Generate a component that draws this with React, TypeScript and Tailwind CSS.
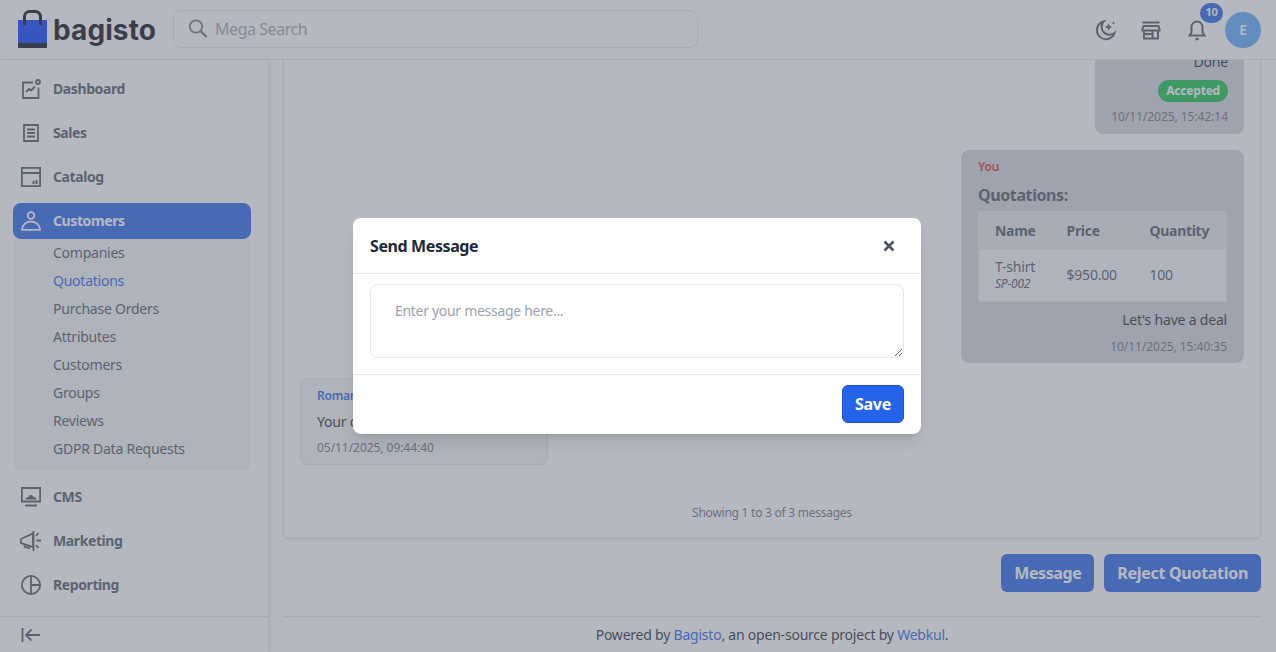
import React from "react";

const ic = { fill: "none", stroke: "currentColor", strokeWidth: 1.8 } as const;

function SearchIcon() {
  return (
    <svg width="20" height="19" viewBox="0 0 20 19" fill="none" stroke="currentColor" className="shrink-0 text-[#6b7280]">
      <circle cx="8" cy="7.500" r="6.200" strokeWidth="1.800" />
      <path d="M12.500 12l6 6" strokeWidth="2.400" />
    </svg>
  );
}
function Dash() {
  return (
    <svg width="20" height="20" viewBox="0 0 20 20" {...ic}>
      <path d="M12 3.500H2V19H17.500V8.500" />
      <circle cx="17" cy="3" r="2" />
      <path d="M5 13l3-3 2 1.500 4-4" />
    </svg>
  );
}
function Sales() {
  return (
    <svg width="16" height="18" viewBox="0 0 16 18" {...ic}>
      <path d="M1 1h14v16H1z" />
      <path d="M4 5.500h8M4 9h8M4 12.500h8" />
    </svg>
  );
}
function Catalog() {
  return (
    <svg width="20" height="20" viewBox="0 0 20 20" {...ic}>
      <path d="M.9.9h18.200v18.200H.9zM.9 6h18.200" />
      <path d="M12.500 14v3M15.500 13v4" strokeWidth="2" />
    </svg>
  );
}
function Cust() {
  return (
    <svg width="20" height="20" viewBox="0 0 20 20" {...ic}>
      <circle cx="10" cy="4.500" r="3.300" />
      <path d="M1 18.800h18C19 14 15 10.500 10 10.500S1 14 1 18.800Z" />
    </svg>
  );
}
function Cms() {
  return (
    <svg width="20" height="20" viewBox="0 0 20 20" {...ic}>
      <path d="M.9 1h18.200v13.500H.9z" />
      <path d="M4 18.500h12" strokeWidth="2" />
      <path d="M4.500 12.500c0-2 2-2.500 3-2.500.3-1 1-2 2.500-2s2.200 1 2.500 2c1 0 3 .5 3 2.500Z" fill="currentColor" stroke="none" />
    </svg>
  );
}
function Mkt() {
  return (
    <svg width="22" height="20" viewBox="0 0 22 20" {...ic}>
      <path d="M1 8l12-5.500V16L1 12Z" />
      <path d="M13.500 0v20" />
      <path d="M4 12.500l1 3.500 4 1-.8-3" />
      <path d="M16 5l2.500-3M16.500 9.500H21M16 14l2.500 3" />
    </svg>
  );
}
function Rep() {
  return (
    <svg width="20" height="20" viewBox="0 0 20 20" {...ic}>
      <circle cx="10" cy="10" r="9.100" />
      <path d="M10 .8V19M10 10h9" />
    </svg>
  );
}
function Moon() {
  return (
    <svg width="24" height="24" viewBox="0 0 24 24" fill="none" stroke="currentColor" strokeWidth="2">
      <path d="M10.500 3.500A9 9 0 1 0 21.500 15 8 8 0 0 1 10.500 3.500Z" />
      <path d="M15.500 5.500l1.200 2.300 2.300 1.200-2.300 1.200-1.200 2.300-1.200-2.300L12 9l2.300-1.200Z" fill="currentColor" stroke="none" />
      <circle cx="20.500" cy="5" r="1.100" fill="currentColor" stroke="none" />
    </svg>
  );
}
function Store() {
  return (
    <svg width="24" height="24" viewBox="0 0 24 24" fill="none" stroke="currentColor" strokeWidth="2">
      <path d="M3.500 4.500h17" />
      <path d="M3.500 11 4.500 8h15l1 3v1.500h-17Z" />
      <path d="M5 12.500v8h14v-8M5 16h8M13.500 12.500v8" />
    </svg>
  );
}
function Bell() {
  return (
    <svg width="24" height="24" viewBox="0 0 24 24" fill="none" stroke="currentColor" strokeWidth="2">
      <path d="M12 3.500a5.500 5.500 0 0 0-5.500 5.500v5.500l-2 3h15l-2-3V9A5.500 5.500 0 0 0 12 3.500Z" />
      <path d="M10.500 21h3" strokeWidth="2.400" />
    </svg>
  );
}

const menu = [
  { label: "Dashboard", Icon: Dash },
  { label: "Sales", Icon: Sales },
  { label: "Catalog", Icon: Catalog },
];
const lower = [
  { label: "CMS", Icon: Cms },
  { label: "Marketing", Icon: Mkt },
  { label: "Reporting", Icon: Rep },
];
const subs = ["Companies", "Quotations", "Purchase Orders", "Attributes", "Customers", "Groups", "Reviews", "GDPR Data Requests"];

function NavRow({ label, Icon }: { label: string; Icon: () => React.ReactElement }) {
  return (
    <div className="flex h-11 items-center">
      <span className="mr-1 flex w-9 shrink-0 items-center justify-center text-[#4b5563]"><Icon /></span>
      <span className="text-sm font-bold tracking-[-0.4px] text-[#4b5563]">{label}</span>
    </div>
  );
}

export default function App() {
  return (
    <div className="relative flex h-[652px] w-[1276px] flex-col overflow-hidden bg-white tracking-[-0.2px] text-[#1f2937] [font-family:'Noto_Sans',sans-serif]">
      <header className="flex h-[60px] shrink-0 items-center border-b border-[#e5e7eb] bg-white pl-[17px] pr-[15px]">
        <svg width="31" height="38" viewBox="0 0 31 38" className="-mt-[2px] shrink-0">
          <path d="M1 10h29v23H1z" fill="#0038ff" />
          <path d="M1 33h29v5H1z" fill="#0a0a1a" />
          <path d="M7.500 15V6.500a5 5 0 0 1 5-5h6a5 5 0 0 1 5 5V15" fill="none" stroke="#0a0a14" strokeWidth="3" />
        </svg>
        <span className="ml-[5px] w-[105px] text-[28px] font-bold leading-none tracking-[0.1px] text-[#0a0a14] [font-family:Inter,sans-serif]">bagisto</span>
        <div className="-mt-[2px] ml-[15px] flex h-[38px] w-[525px] items-center rounded-lg border border-[#e5e7eb] pl-[14px]">
          <SearchIcon />
          <span className="ml-[7px] text-base tracking-[-0.45px] text-[#9ca3af]">Mega Search</span>
        </div>
        <div className="ml-auto flex items-center text-[#4b5563]">
          <Moon />
          <span className="ml-[22px]"><Store /></span>
          <span className="relative ml-[22px]">
            <Bell />
            <span className="absolute -right-[14px] -top-[15px] flex h-5 w-[23px] items-center justify-center rounded-full bg-[#2563eb] text-[11px] font-bold text-white">10</span>
          </span>
          <span className="ml-[16px] flex h-9 w-9 items-center justify-center rounded-full bg-[#5ba6ff] text-sm font-semibold text-white">E</span>
        </div>
      </header>

      <div className="flex min-h-0 flex-1">
        <aside className="flex w-[268px] shrink-0 flex-col bg-white shadow-[2px_0_5px_rgba(0,0,0,0.12)]">
          <nav className="flex-1 pl-[13px] pr-[17px] pt-[7px]">
            {menu.map((m) => <NavRow key={m.label} {...m} />)}
            <div className="mt-1 flex h-9 items-center rounded-lg bg-[#2563eb] text-white">
              <span className="mr-1 flex w-9 shrink-0 items-center justify-center"><Cust /></span>
              <span className="text-sm font-bold tracking-[-0.4px]">Customers</span>
            </div>
            <div className="rounded-b-lg bg-[#f3f4f6] pb-2">
              {subs.map((s) => (
                <div key={s} className={`flex h-7 items-center pl-10 text-sm tracking-[-0.24px] ${s === "Quotations" ? "text-[#2563eb]" : "text-[#4b5563]"}`}>{s}</div>
              ))}
            </div>
            <div className="mt-1">
              {lower.map((m) => <NavRow key={m.label} {...m} />)}
            </div>
          </nav>
          <div className="flex h-[36px] shrink-0 items-center border-t border-[#e5e7eb] pl-[21px] text-[#4b5563]">
            <svg width="20" height="16" viewBox="0 0 20 16" fill="none" stroke="currentColor" strokeWidth="1.800">
              <path d="M1.500 1v14M19 8H5M10.500 2.500 5 8l5.500 5.500" />
            </svg>
          </div>
        </aside>

        <main className="flex min-w-0 flex-1 flex-col justify-end overflow-hidden px-[15px]">
          <section className="flex shrink-0 flex-col rounded-b border border-t-0 border-[#e5e7eb] bg-white px-4 pb-4 shadow-sm">
            <div className="flex flex-col">
              <div className="self-end rounded-lg bg-[#d1d5db] px-4 pb-[9px] pt-3 text-right">
                <p className="text-sm">Done</p>
                <span className="mt-2 inline-block rounded-full bg-[#11c048] px-2 py-[3px] text-xs font-bold text-white">Accepted</span>
                <p className="mt-[7px] text-xs tracking-[-0.05px] text-[#6b7280]">10/11/2025, 15:42:14</p>
              </div>
              <div className="mt-4 w-[283px] self-end rounded-lg border border-[#d1d5db] bg-[#d1d5db] px-4 pb-[7px] pt-2">
                <p className="text-xs font-semibold text-[#dc2626]">You</p>
                <p className="mt-2 text-base font-bold tracking-[-0.4px] text-[#4b5563]">Quotations:</p>
                <table className="mt-1 w-full table-fixed border border-[#e5e7eb] text-left text-sm text-[#4b5563]">
                  <thead className="bg-[#e5e7eb]">
                    <tr className="h-[38px]">
                      <th className="w-[88px] pl-4 font-bold tracking-[-0.3px]">Name</th>
                      <th className="w-[83px] font-bold tracking-[-0.3px]">Price</th>
                      <th className="font-bold tracking-[-0.3px]">Quantity</th>
                    </tr>
                  </thead>
                  <tbody className="bg-[#f3f4f6]">
                    <tr className="h-[52px]">
                      <td className="pl-4 leading-4">T-shirt<br /><i className="text-xs">SP-002</i></td>
                      <td>$950.00</td>
                      <td>100</td>
                    </tr>
                  </tbody>
                </table>
                <p className="mt-2 text-right text-sm">Let's have a deal</p>
                <p className="mt-[9px] text-right text-xs tracking-[-0.05px] text-[#6b7280]">10/11/2025, 15:40:35</p>
              </div>
              <div className="mt-[15px] w-[248px] rounded-lg border border-[#e5e7eb] bg-[#f3f4f6] px-4 pb-2 pt-[9px]">
                <p className="text-xs font-semibold text-[#2563eb]">Roman Tailor</p>
                <p className="mt-2 text-sm">Your quotation is ready</p>
                <p className="mt-2 text-xs tracking-[-0.05px] text-[#6b7280]">05/11/2025, 09:44:40</p>
              </div>
            </div>
            <p className="mt-10 text-center text-xs tracking-[-0.25px] text-[#6b7280]">Showing 1 to 3 of 3 messages</p>
          </section>
          <div className="mt-4 flex shrink-0 justify-end gap-[10px]">
            <button className="h-[38px] rounded-md bg-[#2563eb] px-[13px] text-base font-bold tracking-[-0.4px] text-white">Message</button>
            <button className="h-[38px] rounded-md bg-[#2563eb] px-[13px] text-base font-bold tracking-[-0.3px] text-white">Reject Quotation</button>
          </div>
          <footer className="mt-6 flex h-[36px] shrink-0 items-center justify-center border-t border-[#e5e7eb] text-sm">
            <span className="tracking-[-0.22px]">Powered by <span className="text-[#2563eb]">Bagisto</span>, an open-source project by <span className="text-[#2563eb]">Webkul</span>.</span>
          </footer>
        </main>
      </div>

      <div className="absolute inset-0 flex items-start justify-center bg-[rgba(107,114,128,0.5)] pr-[2px] pt-[218px]">
        <div className="w-[568px] rounded-lg bg-white shadow-lg">
          <div className="flex h-[56px] items-center justify-between border-b border-[#e5e7eb] px-[17px]">
            <h2 className="text-base font-bold tracking-[-0.4px] text-[#1f2937]">Send Message</h2>
            <svg width="12" height="12" viewBox="0 0 12 12" className="mr-[9px] text-[#4b5563]" fill="none" stroke="currentColor" strokeWidth="2.600"><path d="M1.500 1.500l9 9M10.500 1.500l-9 9" /></svg>
          </div>
          <div className="border-b border-[#e5e7eb] px-[17px] pb-4 pt-[10px]">
            <textarea readOnly placeholder="Enter your message here..." className="block h-[74px] w-full rounded-lg border border-[#e5e7eb] px-6 py-4 text-sm tracking-[-0.3px] text-[#1f2937] outline-none placeholder:text-[#9ca3af]" />
          </div>
          <div className="flex h-[59px] items-start justify-end px-[17px] pt-[10px]">
            <button className="h-[38px] rounded-md border border-[#1d4ed8] bg-[#2563eb] px-3 text-base font-bold tracking-[-0.25px] text-white">Save</button>
          </div>
        </div>
      </div>
    </div>
  );
}
